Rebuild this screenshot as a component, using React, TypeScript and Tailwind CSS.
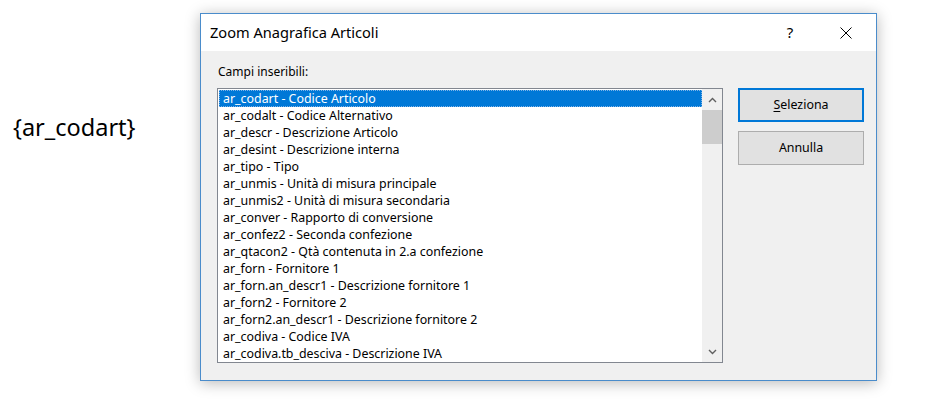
const campi = [
  'ar_codart - Codice Articolo',
  'ar_codalt - Codice Alternativo',
  'ar_descr - Descrizione Articolo',
  'ar_desint - Descrizione interna',
  'ar_tipo - Tipo',
  'ar_unmis - Unità di misura principale',
  'ar_unmis2 - Unità di misura secondaria',
  'ar_conver - Rapporto di conversione',
  'ar_confez2 - Seconda confezione',
  'ar_qtacon2 - Qtà contenuta in 2.a confezione',
  'ar_forn - Fornitore 1',
  'ar_forn.an_descr1 - Descrizione fornitore 1',
  'ar_forn2 - Fornitore 2',
  'ar_forn2.an_descr1 - Descrizione fornitore 2',
  'ar_codiva - Codice IVA',
  'ar_codiva.tb_desciva - Descrizione IVA',
];

function ListaCampi() {
  return (
    <div className="flex h-[275px] w-[506px] border border-[#828790] bg-white">
      <div className="flex-1 py-px pl-px">
        {campi.map((c, i) => (
          <div
            key={c}
            className={
              i === 0
                ? 'h-[17px] border border-dotted border-[#7fb4e8] bg-[#0078d7] pl-[3px] text-[12.4px] leading-[15px] text-white'
                : 'h-[17px] pl-[4px] text-[12.4px] leading-[17px] text-black'
            }
          >
            {c}
          </div>
        ))}
      </div>
      <div className="flex w-[20px] flex-col bg-[#f0f0f0]">
        <div className="flex h-[21px] items-center justify-center">
          <svg width="9" height="6" viewBox="0 0 9 6">
            <path d="M1 5 L4.5 1.5 L8 5" stroke="#606060" strokeWidth="1.4" fill="none" />
          </svg>
        </div>
        <div className="h-[34px] bg-[#cdcdcd]" />
        <div className="flex-1" />
        <div className="flex h-[21px] items-center justify-center">
          <svg width="9" height="6" viewBox="0 0 9 6">
            <path d="M1 1 L4.5 4.5 L8 1" stroke="#606060" strokeWidth="1.4" fill="none" />
          </svg>
        </div>
      </div>
    </div>
  );
}

export default function App() {
  return (
    <div className="flex h-[399px] w-[926px] items-start bg-white font-['Noto_Sans','Open_Sans',sans-serif]">
      <div className="ml-[13px] mt-[112px] w-[187px] text-[23.5px] leading-[30px] text-black">
        {'{ar_codart}'}
      </div>
      <div className="mt-[13px] flex h-[368px] w-[677px] flex-col border border-[#4a8ccb] bg-[#f0f0f0] shadow-[0_2px_14px_rgba(0,0,0,0.28)]">
        <div className="flex h-[37px] items-center bg-white pl-[9px]">
          <span className="flex-1 text-[14.6px] text-black">Zoom Anagrafica Articoli</span>
          <span className="w-[56px] text-center text-[15px] text-black">?</span>
          <span className="flex w-[56px] items-center justify-center">
            <svg width="12" height="12" viewBox="0 0 12 12">
              <path d="M0.5 0.5 L11.5 11.5 M11.5 0.5 L0.5 11.5" stroke="#000" strokeWidth="1" />
            </svg>
          </span>
          <span className="w-[2px]" />
        </div>
        <div className="flex gap-[15px] pl-[16px] pt-[14px]">
          <div className="flex flex-col">
            <div className="mb-[9px] pl-px text-[12px] leading-[14px] text-black">Campi inseribili:</div>
            <ListaCampi />
          </div>
          <div className="flex flex-col gap-[9px] pt-[23px]">
            <button className="h-[34px] w-[126px] border-2 border-[#0078d7] bg-[#e1e1e1] text-[12.4px] text-black">
              <span className="underline underline-offset-2">S</span>eleziona
            </button>
            <button className="h-[34px] w-[126px] border border-[#adadad] bg-[#e1e1e1] text-[12.4px] text-black">
              Annulla
            </button>
          </div>
        </div>
      </div>
    </div>
  );
}
